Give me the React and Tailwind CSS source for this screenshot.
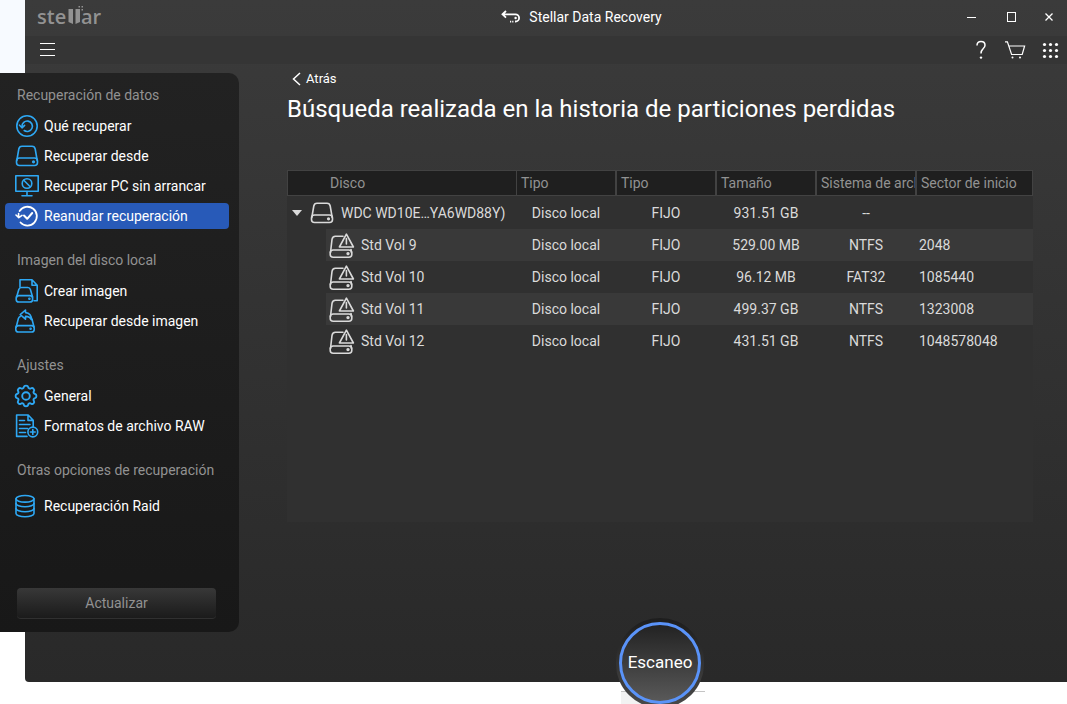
import clsx from 'clsx';

const IconBase = ({ children, className = 'h-6 w-6', viewBox = '0 0 24 24', strokeWidth = '1.6' }) => (
    <svg
        viewBox={viewBox}
        className={clsx('shrink-0', className)}
        fill="none"
        stroke="currentColor"
        strokeWidth={strokeWidth}
        strokeLinecap="round"
        strokeLinejoin="round"
        aria-hidden="true"
    >
        {children}
    </svg>
);

const RestoreIcon = () => (
    <IconBase>
        <circle cx="12" cy="12" r="10.2" />
        <path d="M7 12.5a5.2 5.2 0 1 1 2.2 4" />
        <path d="M4.5 11.2 7 13.8l2.6-2.4" />
    </IconBase>
);

const DriveIcon = ({ className }) => (
    <IconBase className={className}>
        <path d="M1.8 16.5 3.8 5c.4-2 1.4-2.7 3.2-2.7h10c1.8 0 2.8.7 3.2 2.7l2 11.5" />
        <rect x="1.5" y="14" width="21" height="7.5" rx="3" />
        <circle cx="18.5" cy="17.8" r=".8" fill="currentColor" />
    </IconBase>
);

const MonitorIcon = () => (
    <IconBase>
        <rect x=".8" y="1.8" width="22.4" height="15.4" />
        <circle cx="12" cy="9.5" r="4.8" />
        <path d="m8.8 6.3 6.4 6.4M12 17.5V21M7 21.7h10" />
    </IconBase>
);

const ResumeIcon = () => (
    <IconBase>
        <path d="M4.6 7A9.4 9.4 0 1 1 5.5 18.5" strokeWidth="1.8" />
        <path d="M3.6 9.6v2.6M1 11l2.8 2.6L7 11.4" />
        <path d="m9 11.5 3.2 3.3 5-5.8" strokeWidth="2" />
    </IconBase>
);

const CreateImageIcon = () => (
    <IconBase>
        <path d="M5 8V.8h12l5.2 5.4v15.6H19M17 .8v5.4h5" />
        <path d="M1.6 18 3.8 10.5c.5-1.5 1.2-2 2.6-2h6.4c1.4 0 2.1.5 2.6 2L17.6 18" />
        <rect x="1.2" y="16.6" width="16.4" height="6.4" rx="2.6" />
        <circle cx="14.4" cy="19.8" r=".5" fill="currentColor" />
    </IconBase>
);

const RecoverImageIcon = () => (
    <IconBase>
        <path d="M1.2 18 3.4 9.5c.3-1 .8-1.6 1.8-2M16.4 9.2c.3.2.5.6.6 1.1L19 18" />
        <rect x=".8" y="16.6" width="18.4" height="6.4" rx="2.6" />
        <circle cx="15.6" cy="19.8" r=".5" fill="currentColor" />
        <path d="M10.5 1 5.2 5.6l5.3 4.6V7.4c2.8-.1 4.6.8 5.8 3.2.4-4-1.8-6.7-5.8-7Z" />
    </IconBase>
);

const GearIcon = () => (
    <IconBase className="-ml-px h-6 w-6" strokeWidth="1.9">
        <circle cx="12" cy="12" r="3.8" />
        <path d="M12 1.6c1 0 1.9.3 2.1 1.3.3 1.6 1.7 2.1 3 1.3 1-.6 1.9-.1 2.5.6.7.7.9 1.5.3 2.3-.9 1.3-.3 2.6 1.2 2.9 1 .2 1.3 1 1.3 2s-.3 1.9-1.3 2.1c-1.5.3-2.1 1.6-1.2 2.9.6.9.4 1.7-.3 2.4s-1.5.9-2.4.3c-1.3-.8-2.8-.3-3.1 1.3-.2 1-1.1 1.3-2.1 1.3s-1.9-.3-2.1-1.3c-.3-1.6-1.8-2.1-3.1-1.3-.9.6-1.7.4-2.4-.3s-.9-1.5-.3-2.4c.9-1.3.3-2.6-1.2-2.9-1-.2-1.3-1.1-1.3-2.1s.3-1.8 1.3-2c1.5-.3 2.1-1.6 1.2-2.9-.6-.8-.4-1.6.3-2.3.7-.7 1.5-1.2 2.5-.6 1.3.8 2.7.3 3-1.300.2-1 1.1-1.3 2.1-1.3Z" />
    </IconBase>
);

const RawFileIcon = () => (
    <IconBase>
        <path d="M12 22.4H1.6V1h11.6l5 5.2v7M13 1.2v5.2h5" />
        <path d="M4.5 6.5h5M4.5 10.5h10.5M4.5 14.5h8M4.5 18.5h6" />
        <circle cx="17.8" cy="18" r="4.9" />
        <path d="M17.8 15.6v4.8M15.4 18h4.8" />
    </IconBase>
);

const RaidIcon = () => (
    <IconBase>
        <ellipse cx="10" cy="4.8" rx="9" ry="3.3" />
        <path d="M1 4.8v14.6c0 1.8 4 3.3 9 3.3s9-1.5 9-3.3V4.8" />
        <path d="M1 9.5c0 1.8 4 3.3 9 3.3s9-1.5 9-3.3M1 14.5c0 1.8 4 3.3 9 3.3s9-1.5 9-3.3" />
    </IconBase>
);

const WarnDriveIcon = () => (
    <IconBase className="h-[26px] w-[26px]" viewBox="0 0 26 26">
        <path d="M1.5 20.5 3 7.5c.3-2.3 1.3-3.3 3.4-3.3H14M22 17.5l.5 3" />
        <rect x="1.2" y="18" width="21.6" height="7.2" rx="3" />
        <circle cx="19" cy="21.6" r=".9" fill="currentColor" />
        <path d="m17.4 2.2 7 12.8h-14Z" />
        <path d="M17.4 6.5V12" />
    </IconBase>
);

const Logo = () => (
    <svg viewBox="0 -4 68 32" className="h-8 w-[68px]" fill="#929292" role="img" aria-label="stellar">
        <text x="0" y="19" fontFamily="'Open Sans', sans-serif" fontSize="20" fontWeight="600">ste</text>
        <path d="M31.5 4H36v15l-4.5-2ZM38.500 4H43v13l-4.500 2ZM41.500 1H43v1.500h-1.500ZM44.500 1H46v1.500h-1.500ZM44.500 4H46v1.500h-1.500Z" />
        <text x="44" y="19" fontFamily="'Open Sans', sans-serif" fontSize="20" fontWeight="600">ar</text>
    </svg>
);

const menu = [
    {
        title: 'Recuperación de datos',
        items: [
            { label: 'Qué recuperar', icon: RestoreIcon },
            { label: 'Recuperar desde', icon: DriveIcon },
            { label: 'Recuperar PC sin arrancar', icon: MonitorIcon },
            { label: 'Reanudar recuperación', icon: ResumeIcon, active: true },
        ],
    },
    {
        title: 'Imagen del disco local',
        items: [
            { label: 'Crear imagen', icon: CreateImageIcon },
            { label: 'Recuperar desde imagen', icon: RecoverImageIcon },
        ],
    },
    {
        title: 'Ajustes',
        items: [
            { label: 'General', icon: GearIcon },
            { label: 'Formatos de archivo RAW', icon: RawFileIcon },
        ],
    },
    {
        title: 'Otras opciones de recuperación',
        spaced: true,
        items: [{ label: 'Recuperación Raid', icon: RaidIcon }],
    },
];

const volumes = [
    { name: 'Std Vol 9', size: '529.00 MB', fs: 'NTFS', sector: '2048' },
    { name: 'Std Vol 10', size: '96.12 MB', fs: 'FAT32', sector: '1085440' },
    { name: 'Std Vol 11', size: '499.37 GB', fs: 'NTFS', sector: '1323008' },
    { name: 'Std Vol 12', size: '431.51 GB', fs: 'NTFS', sector: '1048578048' },
];

const columns = ['Tipo', 'Tipo', 'Tamaño', 'Sistema de arch'];

const TitleBar = () => (
    <header className="flex h-9 items-center pb-0.5">
        <div className="w-[187px] pl-3">
            <Logo />
        </div>
        <div className="flex flex-1 items-center justify-center gap-2 text-sm">
            <svg viewBox="0 0 20 14" className="h-3.5 w-5" fill="none" stroke="currentColor" strokeWidth="1.8" aria-hidden="true">
                <path d="M5 1 1.5 4.3 5 7.6M2 4.3h12.5a3.6 3.6 0 0 1 0 7.2H14" />
                <circle cx="14.600" cy="8" r="1.2" fill="currentColor" stroke="none" />
                <path d="M9 11.6h4" strokeDasharray="1.2 1" />
            </svg>
            <h1>Stellar Data Recovery</h1>
        </div>
        <div className="flex">
            <button type="button" aria-label="Minimizar" className="flex h-8 w-10 items-center justify-center">
                <span className="h-px w-[9px] bg-white" />
            </button>
            <button type="button" aria-label="Maximizar" className="flex h-8 w-10 items-center justify-center">
                <span className="h-[10px] w-[9px] border border-white" />
            </button>
            <button type="button" aria-label="Cerrar" className="flex h-8 w-9 items-center justify-center">
                <svg viewBox="0 0 8 8" className="h-2 w-2" stroke="currentColor" strokeWidth="1.3" aria-hidden="true">
                    <path d="m.5.5 7 7M7.5.5l-7 7" />
                </svg>
            </button>
        </div>
    </header>
);

const Toolbar = () => (
    <div className="flex h-7 items-center justify-between bg-[#353535] pr-2 pb-0.5 pl-[15px]">
        <button type="button" aria-label="Menú" className="flex w-[15px] flex-col gap-[5px]">
            <span className="h-px bg-white" />
            <span className="h-px bg-white" />
            <span className="h-px bg-white" />
        </button>
        <div className="flex items-center gap-4 pt-0.5">
            <button type="button" aria-label="Ayuda" className="w-[14px]">
                <svg viewBox="0 0 14 20" className="h-5 w-[14px]" fill="none" stroke="currentColor" strokeWidth="1.5" aria-hidden="true">
                    <path d="M3 5.5C3 3 4.6 1.5 7 1.5s4 1.5 4 3.7c0 1.9-1 2.7-2.2 3.9C7.6 10.2 7 11 7 13.5" />
                    <circle cx="7" cy="17.6" r="1.2" fill="currentColor" stroke="none" />
                </svg>
            </button>
            <button type="button" aria-label="Carrito">
                <svg viewBox="0 0 22 18" className="h-[18px] w-[22px]" fill="none" stroke="currentColor" strokeWidth="1.2" aria-hidden="true">
                    <path d="M1 .8h2.4L7.6 13.500h10.600L20.600 5H5" />
                    <circle cx="8.5" cy="16.5" r="1" fill="currentColor" stroke="none" />
                    <circle cx="16" cy="16.5" r="1" fill="currentColor" stroke="none" />
                </svg>
            </button>
            <button type="button" aria-label="Aplicaciones">
                <svg viewBox="0 0 17 17" className="h-[17px] w-[17px]" fill="currentColor" aria-hidden="true">
                    {[2.5, 8.5, 14.5].map((y) =>
                        [2.5, 8.5, 14.5].map((x) => <circle key={`${x}-${y}`} cx={x} cy={y} r="1.6" />)
                    )}
                </svg>
            </button>
        </div>
    </div>
);

const Sidebar = () => (
    <aside className="-ml-[25px] mt-[9px] w-[239px] shrink-0 self-start rounded-r-[10px] bg-linear-to-b from-[#222222] to-[#181818] pt-3 pb-[13px] text-sm">
        <nav className="flex flex-col gap-[19px]">
            {menu.map((group) => (
                <section key={group.title}>
                    <h2 className="pl-[17px] leading-5 text-[#929292]">{group.title}</h2>
                    <ul className={group.spaced ? 'mt-[11px]' : 'mt-[6px]'}>
                        {group.items.map(({ label, icon: Icon, active }) => (
                            <li key={label} className="flex h-[30px] items-center pr-[10px] pl-[5px]">
                                <a
                                    href="#"
                                    className={clsx(
                                        'flex h-[26px] flex-1 items-center gap-[5px] rounded pl-[10px] whitespace-nowrap',
                                        active && 'bg-[#285ab8]'
                                    )}
                                >
                                    <span className={clsx('w-6', active ? 'text-white' : 'text-[#2ea8f4]')}>
                                        <Icon />
                                    </span>
                                    {label}
                                </a>
                            </li>
                        ))}
                    </ul>
                </section>
            ))}
        </nav>
        <button
            type="button"
            className="mt-[67px] ml-[17px] block h-[31px] w-[199px] rounded border-b border-[#303030] bg-linear-to-b from-[#383838] to-[#1b1b1b] text-[#929292]"
        >
            Actualizar
        </button>
    </aside>
);

const DiskTable = () => (
    <div className="mt-[45px] flex-1 bg-[#303030]">
        <table className="w-full table-fixed border-separate border-spacing-0 text-sm whitespace-nowrap text-[#dadada]">
            <colgroup>
                <col />
                <col className="w-[100px]" />
                <col className="w-[100px]" />
                <col className="w-[100px]" />
                <col className="w-[100px]" />
                <col className="w-[116px]" />
            </colgroup>
            <thead>
                <tr className="h-[26px] text-left text-[#929292] [&>th]:overflow-hidden [&>th]:border-y [&>th]:border-[#424242] [&>th]:bg-[#1f1f1f] [&>th]:p-0 [&>th]:font-normal">
                    <th scope="col" className="border-x">
                        <span className="pl-[42px]">Disco</span>
                    </th>
                    {columns.map((name, i) => (
                        <th key={i} scope="col" className="border-r-2">
                            <span className="block overflow-hidden pl-1">{name}</span>
                        </th>
                    ))}
                    <th scope="col" className="border-r">
                        <span className="pl-1">Sector de inicio</span>
                    </th>
                </tr>
            </thead>
            <tbody className="text-center [&_td]:p-0 [&_td]:pr-0.5 [&_td:last-child]:pr-0">
                <tr className="h-[33px]">
                    <td>
                        <div className="flex items-center">
                            <button type="button" aria-label="Contraer disco" className="flex w-[23px] pl-[5px]">
                                <svg viewBox="0 0 10 6" className="h-1.5 w-2.5" fill="currentColor" aria-hidden="true">
                                    <path d="M0 0h10L5 6Z" />
                                </svg>
                            </button>
                            <DriveIcon className="h-6 w-6" />
                            <span className="pl-[7px]">WDC WD10E…YA6WD88Y)</span>
                        </div>
                    </td>
                    <td>Disco local</td>
                    <td>FIJO</td>
                    <td>931.51 GB</td>
                    <td>--</td>
                    <td />
                </tr>
                {volumes.map((v) => (
                    <tr key={v.name} className="h-8 [&:nth-child(even)>td+td]:bg-[#393939] [&:nth-child(even)_div]:bg-[#393939]">
                        {/* the stripe starts at the icon, not at the table edge */}
                        <td>
                            <div className="-mr-0.5 ml-[39px] flex h-8 items-center gap-[6px] pl-[3px]">
                                <WarnDriveIcon />
                                {v.name}
                            </div>
                        </td>
                        <td>Disco local</td>
                        <td>FIJO</td>
                        <td>{v.size}</td>
                        <td>{v.fs}</td>
                        <td className="text-left">
                            <span className="pl-0.5">{v.sector}</span>
                        </td>
                    </tr>
                ))}
            </tbody>
        </table>
    </div>
);

const ScanButton = () => (
    <div className="relative mt-24 -mb-[26px] flex h-[90px] w-[88px] items-center justify-center self-center rounded-full bg-linear-to-b from-[#1d1d1d] to-[#4a4a4a]">
        {/* strip that peeks out below the window */}
        <div className="absolute top-[73px] left-[5px] -z-10 h-4 w-[84px] border-t border-[#c4c4c4] bg-linear-to-r from-[#f2f2f2] from-50% to-white to-50%" />
        <button
            type="button"
            className="h-[82px] w-[82px] rounded-full border-[3px] border-[#5a93f8] bg-linear-to-b from-[#232323] to-[#595959] text-[17px]"
        >
            Escaneo
        </button>
    </div>
);

export default function App() {
    return (
        <div className="relative isolate flex min-h-screen flex-col overflow-hidden bg-white font-['Roboto',sans-serif] text-white">
            <div className="absolute top-0 left-0 -z-10 h-20 w-[25px] bg-[#f7faff]" />
            <div className="mb-[22px] ml-[25px] flex flex-1 flex-col rounded-bl bg-linear-to-b from-[#3b3b3b] to-[#292929]">
                <TitleBar />
                <Toolbar />
                <div className="flex flex-1">
                    <Sidebar />
                    <main className="flex flex-1 flex-col pt-[5px] pr-[34px] pl-12">
                        <a href="#" className="ml-[5px] flex h-5 items-center gap-[5px] self-start text-[13px]">
                            <svg viewBox="0 0 9 14" className="h-3.5 w-[9px]" fill="none" stroke="currentColor" strokeWidth="1.5" aria-hidden="true">
                                <path d="M8 1 1.5 7 8 13" />
                            </svg>
                            Atrás
                        </a>
                        <h2 className="mt-1 text-2xl leading-8">
                            Búsqueda realizada en la historia de particiones perdidas
                        </h2>
                        <DiskTable />
                        <ScanButton />
                    </main>
                </div>
            </div>
        </div>
    );
}
